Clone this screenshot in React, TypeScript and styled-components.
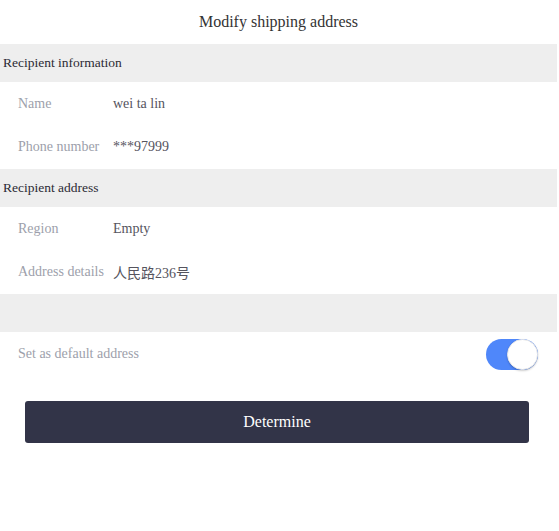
import React from "react";
import styled, { createGlobalStyle } from "styled-components";

const Global = createGlobalStyle`
  html, body { margin: 0; padding: 0; background: #fff; }
  body { font-family: "Liberation Serif", "Noto Sans CJK SC", serif; }
`;

const Page = styled.div`
  width: 557px;
  display: flex;
  flex-direction: column;
`;

const Header = styled.div`
  height: 44px;
  display: flex;
  align-items: center;
  justify-content: center;
  font-size: 16px;
  color: #333;
`;

const Section = styled.div`
  height: 38px;
  background: #eeeeee;
  display: flex;
  align-items: center;
  padding-left: 3px;
  font-size: 13.5px;
  color: #2c2a34;
`;

const Row = styled.div`
  height: 43.5px;
  display: flex;
  align-items: center;
  padding-left: 18px;
  font-size: 14px;
`;

const Label = styled.span`
  width: 95px;
  flex-shrink: 0;
  color: #9d9fab;
`;

const Value = styled.span`
  color: #55545e;
  font-family: "Liberation Serif", "Noto Sans CJK SC", serif;
`;

const SwitchRow = styled.div`
  height: 44px;
  display: flex;
  align-items: center;
  justify-content: space-between;
  padding: 0 19px 0 18px;
  font-size: 14px;
  color: #9d9fab;
`;

const Toggle = styled.div<{ $on: boolean }>`
  width: 52px;
  height: 31px;
  border-radius: 16px;
  background: ${(p) => (p.$on ? "#4f87fa" : "#ddd")};
  position: relative;
`;

const Knob = styled.div`
  position: absolute;
  top: 0;
  right: 0;
  width: 31px;
  height: 31px;
  border-radius: 50%;
  background: #fff;
  box-shadow: 0 1px 2px rgba(0, 0, 0, 0.2);
  box-sizing: border-box;
  border: 1px solid #e8e8e8;
`;

const Button = styled.button`
  margin: 25px 28px 0 25px;
  height: 42px;
  border: none;
  border-radius: 3px;
  background: #323448;
  color: #fff;
  font-family: "Liberation Serif", serif;
  font-size: 16px;
  cursor: pointer;
`;

export default function App() {
  return (
    <>
      <Global />
      <Page>
        <Header>Modify shipping address</Header>
        <Section>Recipient information</Section>
        <Row>
          <Label>Name</Label>
          <Value>wei ta lin</Value>
        </Row>
        <Row>
          <Label>Phone number</Label>
          <Value>***97999</Value>
        </Row>
        <Section>Recipient address</Section>
        <Row>
          <Label>Region</Label>
          <Value>Empty</Value>
        </Row>
        <Row>
          <Label>Address details</Label>
          <Value>人民路236号</Value>
        </Row>
        <Section />
        <SwitchRow>
          <span>Set as default address</span>
          <Toggle $on>
            <Knob />
          </Toggle>
        </SwitchRow>
        <Button>Determine</Button>
      </Page>
    </>
  );
}
